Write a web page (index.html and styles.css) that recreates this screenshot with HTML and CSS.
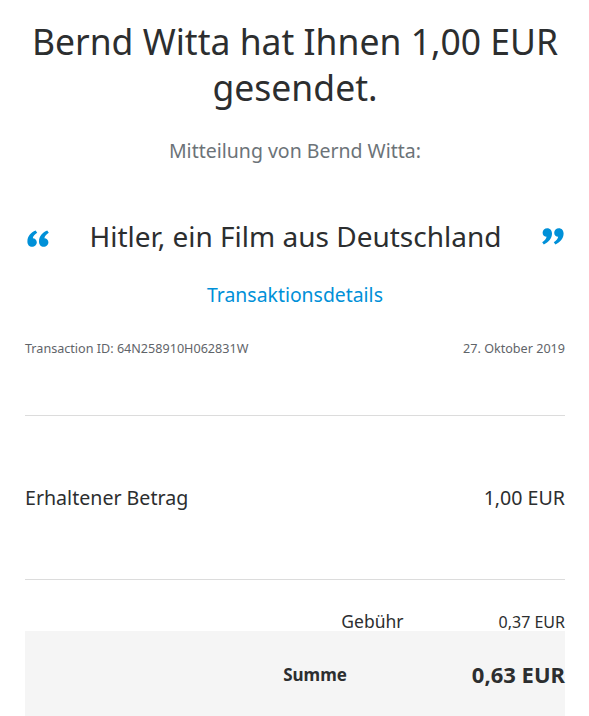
FILE: index.html
```html
<!DOCTYPE html>
<html lang="de">
<head>
<meta charset="utf-8">
<link rel="stylesheet" href="styles.css">
</head>
<body>
<main class="page">
  <h1 class="title">Bernd Witta hat Ihnen 1,00 EUR gesendet.</h1>
  <p class="note-label">Mitteilung von Bernd Witta:</p>
  <div class="quote">
    <svg class="qmark" viewBox="0 0 22 17" aria-hidden="true">
      <path d="M8.6 0.6C3.8 2.6 0.4 6.6 0.4 11.4 0.4 14.6 2.4 16.8 5.1 16.8 7.7 16.8 9.8 14.9 9.8 12.3 9.8 9.9 8 8.2 5.8 8.2 6.2 6 7.8 4.2 10.2 2.8Z"/>
      <path d="M20.2 0.6C15.4 2.6 12 6.6 12 11.4 12 14.6 14 16.8 16.7 16.8 19.3 16.8 21.4 14.9 21.4 12.3 21.4 9.9 19.6 8.2 17.4 8.2 17.8 6 19.4 4.2 21.8 2.8Z"/>
    </svg>
    <span class="quote-text">Hitler, ein Film aus Deutschland</span>
    <svg class="qmark qmark-close" viewBox="0 0 22 17" aria-hidden="true">
      <path d="M8.6 0.6C3.8 2.6 0.4 6.6 0.4 11.4 0.4 14.6 2.4 16.8 5.1 16.8 7.7 16.8 9.8 14.9 9.8 12.3 9.8 9.9 8 8.2 5.8 8.2 6.2 6 7.8 4.2 10.2 2.8Z"/>
      <path d="M20.2 0.6C15.4 2.6 12 6.6 12 11.4 12 14.6 14 16.8 16.7 16.8 19.3 16.8 21.4 14.9 21.4 12.3 21.4 9.9 19.6 8.2 17.4 8.2 17.8 6 19.4 4.2 21.8 2.8Z"/>
    </svg>
  </div>
  <p class="details-link"><a href="#">Transaktionsdetails</a></p>
  <div class="meta">
    <span>Transaction ID: 64N258910H062831W</span>
    <span>27. Oktober 2019</span>
  </div>
  <hr class="rule">
  <div class="received">
    <span>Erhaltener Betrag</span>
    <span>1,00 EUR</span>
  </div>
  <hr class="rule">
  <div class="fee">
    <span class="fee-label">Gebühr</span>
    <span class="fee-value">0,37 EUR</span>
  </div>
  <div class="total">
    <span class="total-label">Summe</span>
    <span class="total-value">0,63 EUR</span>
  </div>
</main>
</body>
</html>
```

FILE: styles.css
```css
* { box-sizing: border-box; }
html, body { margin: 0; padding: 0; background: #fff; }
body {
  font-family: "Noto Sans", "Open Sans", sans-serif;
  color: #2c2e2f;
}
.page {
  padding: 0 24px 0 25px;
}
.title {
  margin: 18px 0 0;
  font-size: 35.5px;
  line-height: 46px;
  font-weight: 400;
  text-align: center;
  color: #2c2e2f;
}
.note-label {
  margin: 29px 0 0;
  font-size: 19.5px;
  line-height: 24px;
  color: #6c7378;
  text-align: center;
}
.quote {
  margin-top: 53px;
  display: flex;
  align-items: center;
  justify-content: space-between;
  padding: 0 1px 0 2px;
}
.qmark {
  width: 22px;
  height: 17px;
  fill: #0090d8;
  margin-top: 4px;
}
.qmark-close {
  transform: rotate(180deg);
  margin-top: 0;
}
.quote-text {
  font-size: 28px;
  line-height: 40px;
  color: #2c2e2f;
}
.details-link {
  margin: 26px 0 0;
  text-align: center;
  font-size: 19.4px;
  line-height: 26px;
}
.details-link a {
  color: #0090d8;
  text-decoration: none;
}
.meta {
  margin-top: 33px;
  display: flex;
  justify-content: space-between;
  font-size: 12.6px;
  line-height: 16px;
  color: #5f6469;
}
.rule {
  margin: 0;
  border: 0;
  border-top: 1px solid #dcdcdc;
}
.meta + .rule { margin-top: 58px; }
.received {
  display: flex;
  justify-content: space-between;
  align-items: baseline;
  font-size: 19.6px;
  line-height: 26px;
  padding: 69px 0 68px;
  color: #2c2e2f;
}
.fee {
  display: flex;
  justify-content: flex-end;
  align-items: baseline;
  padding-top: 30px;
  height: 51px;
  font-size: 17.5px;
  line-height: 22px;
  color: #2c2e2f;
}
.fee-label { margin-right: 95px; }
.fee-value { font-size: 16px; }
.total {
  display: flex;
  justify-content: flex-end;
  align-items: center;
  background: #f5f5f5;
  height: 90px;
  padding-bottom: 4px;
  color: #2c2e2f;
}
.total-label {
  font-size: 17px;
  font-weight: 700;
  margin-right: 125px;
}
.total-value {
  font-size: 22px;
  font-weight: 700;
}
```
